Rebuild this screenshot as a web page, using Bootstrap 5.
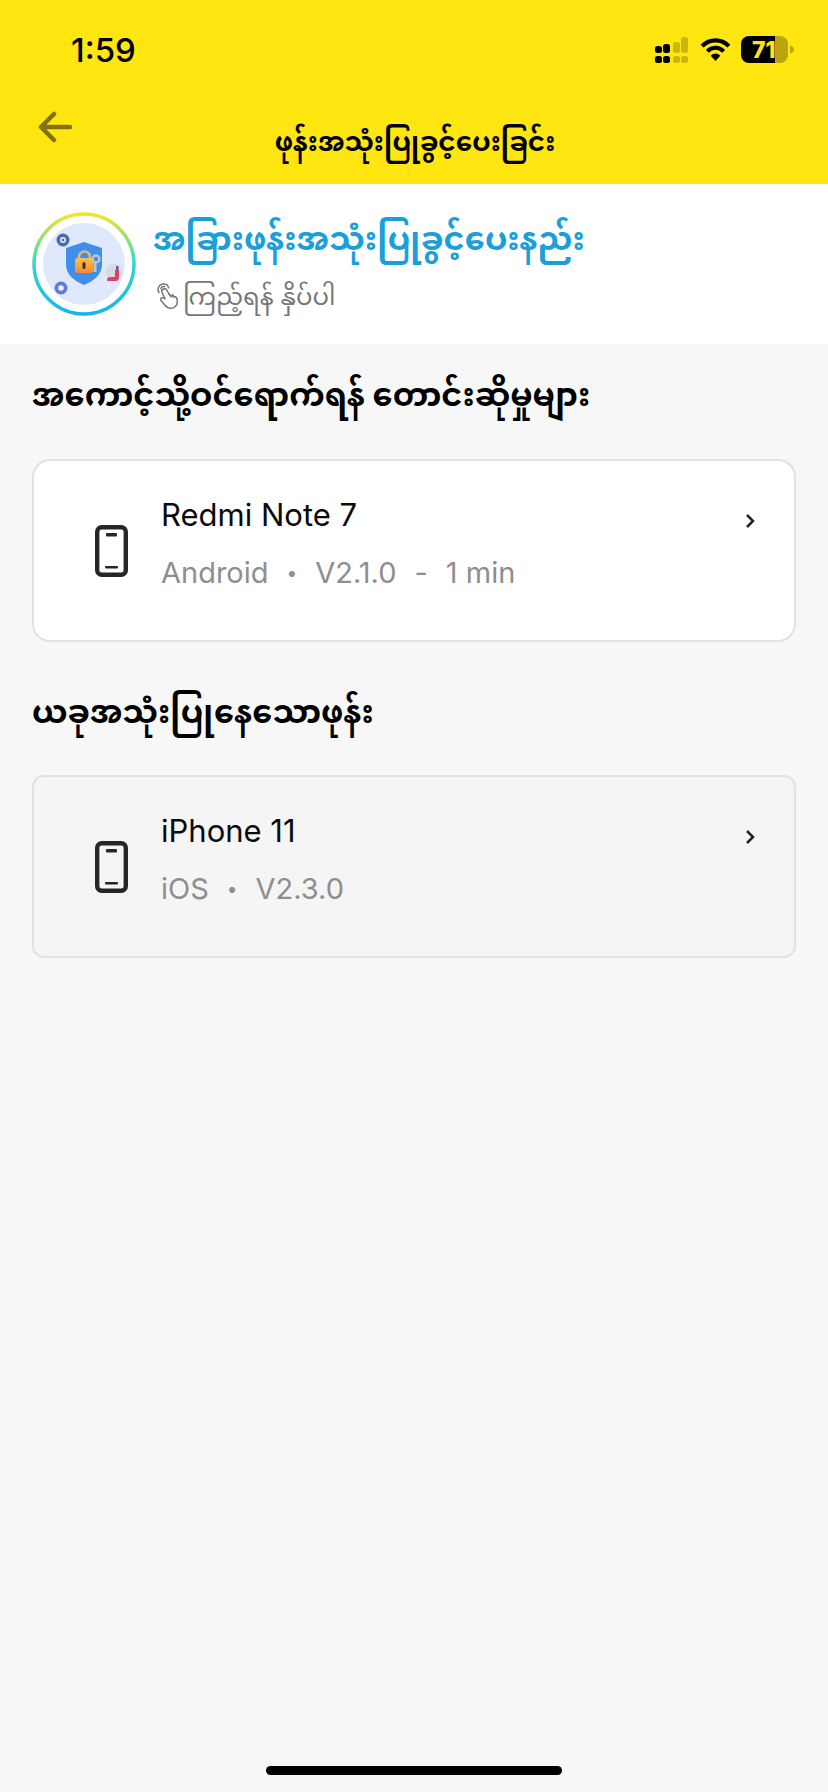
<!DOCTYPE html>
<html lang="my">
<head>
<meta charset="utf-8">
<title>ဖုန်းအသုံးပြုခွင့်ပေးခြင်း</title>
<meta name="viewport" content="width=device-width, initial-scale=1">
<link href="https://cdn.jsdelivr.net/npm/bootstrap@5.3.0/dist/css/bootstrap.min.css" rel="stylesheet">
<style>
html,body{height:100%}
body{background:#f7f7f7;font-family:"Inter","Liberation Sans","Noto Sans Myanmar","Padauk","Noto Sans",sans-serif;color:#000}
.shell{width:828px;height:1792px;overflow:hidden;position:relative}
.topbar{background:#ffe610;height:184px}
.statusline{height:100px;padding:0 33px 0 71px}
.clock{font-size:33px;font-weight:500;line-height:1;padding-top:34px}
.statusicons{padding-top:36px;gap:10px}
.sigicon{margin-top:1px;margin-right:2px}
.wifiicon{margin-top:1px}
.navline{height:84px;position:relative}
.backbtn{position:absolute;left:37px;top:11px;line-height:0}
.navtitle{font-size:26.300px;font-weight:700;line-height:1;padding-top:29px;text-align:center;padding-left:2px}
.promo{background:#fff;height:160px;padding:28px 32px 0 32px;gap:17px}
.promotitle{color:#1a9fdb;font-size:32.100px;font-weight:700;line-height:54px}
.promosub{color:#777;font-size:24.400px;line-height:38px;margin-top:11px;padding-left:4px;gap:5px}
.sectionhead{font-size:32px;font-weight:700;line-height:40px;margin:0 32px;padding-top:31px}
.sectionhead.second{padding-top:50px}
.devicecard{margin:44px 32px 0;height:183px;border:2px solid #e2e2e2;border-radius:18px;background:#fff;padding:0 39px 0 61px}
.devicecard.muted{background:#f5f5f5;border-radius:12px;margin-top:43px}
.devicename{font-size:31px;line-height:36px;padding-top:36px;color:#0a0a0a}
.devicemeta{font-size:29px;line-height:36px;margin-top:22px;color:#8e8e8e;gap:18px}
.metadot{font-size:19px;line-height:1}
.phoneglyph{margin-top:64px;margin-right:33px;flex:none}
.chev{margin-top:52px;flex:none}
.homebar{position:absolute;left:266px;top:1766px;width:296px;height:9px;background:#000;border-radius:5px}
</style>
</head>
<body>
<div class="shell">
  <header class="topbar">
    <div class="statusline d-flex justify-content-between">
      <div class="clock">1:59</div>
      <div class="statusicons d-flex align-items-start">
        <svg class="sigicon" width="33" height="26" viewBox="0 0 33 26" aria-hidden="true">
          <g fill="#000"><rect x="0" y="9" width="7" height="7" rx="2.500"/><rect x="8" y="7" width="7" height="9" rx="2.500"/><rect x="0" y="19" width="7" height="7" rx="2.500"/><rect x="8" y="19" width="7" height="7" rx="2.500"/></g>
          <g fill="#cdb70f"><rect x="18" y="5" width="7" height="11" rx="2.500"/><rect x="26" y="0" width="7" height="16" rx="2.500"/><rect x="18" y="19" width="7" height="7" rx="2.500"/><rect x="26" y="19" width="7" height="7" rx="2.500"/></g>
        </svg>
        <svg class="wifiicon" width="31" height="24" viewBox="0 0 32 25" aria-hidden="true">
          <g fill="none" stroke="#000" stroke-width="4.200"><path d="M2 9.500C10 1.500 22 1.500 30 9.500"/><path d="M7.500 15C12.500 10 19.500 10 24.500 15"/></g>
          <path d="M11 19.500C14 16.500 18 16.500 21 19.500L16 25Z" fill="#000"/>
        </svg>
        <svg width="54" height="27" viewBox="0 0 54 27" aria-hidden="true">
          <path d="M34 0h5a8 8 0 0 1 8 8v11a8 8 0 0 1-8 8h-5z" fill="#b9a60f"/>
          <path d="M34 0H8a8 8 0 0 0-8 8v11a8 8 0 0 0 8 8h26z" fill="#000"/>
          <path d="M49 9.500c2.500 .8 4 2.200 4 4s-1.500 3.200-4 4z" fill="#b9a60f"/>
          <text x="11" y="22" font-family="Inter,'Liberation Sans',sans-serif" font-size="23" font-weight="800" fill="#ffe610">71</text>
        </svg>
      </div>
    </div>
    <div class="navline">
      <a class="backbtn" href="#" aria-label="Back">
        <svg width="35" height="32" viewBox="0 0 35 32" aria-hidden="true"><path d="M33 16H5M17 3 4 16l13 13" fill="none" stroke="#7f730f" stroke-width="4.500" stroke-linecap="round" stroke-linejoin="round"/></svg>
      </a>
      <div class="navtitle">ဖုန်းအသုံးပြုခွင့်ပေးခြင်း</div>
    </div>
  </header>

  <section class="promo d-flex">
    <svg width="104" height="104" viewBox="0 0 104 104" class="flex-shrink-0" aria-hidden="true">
      <defs>
        <linearGradient id="ringgrad" x1="0" y1="0" x2="0" y2="1"><stop offset="0" stop-color="#f5e42a"/><stop offset=".5" stop-color="#35d8c8"/><stop offset="1" stop-color="#16b4ee"/></linearGradient>
        <linearGradient id="lockgrad" x1="0" y1="0" x2="0" y2="1"><stop offset="0" stop-color="#fbc04a"/><stop offset="1" stop-color="#f58a3c"/></linearGradient>
      </defs>
      <circle cx="52" cy="52" r="50" fill="#fff" stroke="url(#ringgrad)" stroke-width="3.500"/>
      <circle cx="52" cy="52" r="41" fill="#dfe9fb"/>
      <path d="M52 30l18 6v17c0 9-8 16-18 20-10-4-18-11-18-20V36z" fill="#3f8eea"/>
      <circle cx="64" cy="47" r="3.500" fill="none" stroke="#b9c6d6" stroke-width="2.500"/><path d="M63 51v9" stroke="#b9c6d6" stroke-width="3"/>
      <path d="M47 46v-1a5.500 5.500 0 0 1 11 0v1" fill="none" stroke="#d9b98a" stroke-width="2.500"/>
      <rect x="43" y="46" width="18" height="15" rx="2.500" fill="url(#lockgrad)"/>
      <rect x="50.500" y="50" width="3" height="7" rx="1.500" fill="#40302a"/>
      <circle cx="31" cy="28" r="6.500" fill="#4a6cad"/><circle cx="31" cy="28" r="3" fill="#dfe9fb"/><circle cx="31" cy="28" r="1.300" fill="#4a6cad"/>
      <circle cx="29" cy="76" r="6.500" fill="#5a7fd0"/><circle cx="29" cy="76" r="2.800" fill="#eef3fd"/>
      <circle cx="82" cy="60" r="8.500" fill="#d8dbe6"/><path d="M75 68c0-2 1-3 3-3h5v-7h4v7c0 2-1 4-3 4h-8c-1 0-1-.500-1-1z" fill="#d9455f"/><rect x="84" y="54" width="2.500" height="4" fill="#3b6c9c"/>
    </svg>
    <div>
      <div class="promotitle">အခြားဖုန်းအသုံးပြုခွင့်ပေးနည်း</div>
      <div class="promosub d-flex align-items-center">
        <svg width="21" height="26" viewBox="0 0 21 26" aria-hidden="true" class="flex-shrink-0"><g fill="none" stroke="#777" stroke-width="1.500" stroke-linecap="round" stroke-linejoin="round"><path d="M4.800 8.500C5.800 11 7 13.500 8 15.800 6.800 15 5 14.300 4 15.200c-.9.800-.3 2 .6 3l3.400 4c1.600 2 3.500 3 5.800 3 3.600 0 6.400-2.600 6.400-6v-2.500c0-1.800-1.200-2.800-2.800-3.200l-3-.8c-1-.3-1.700-.5-2.200-1.200L9.500 6.500C8.500 4.800 4 6 4.800 8.500z"/><path d="M12.400 10.800l1.600 3.200M15.600 11.500l1.300 2.800"/><path d="M2 9.500C-.5 5.500 2.500 1 6.500 1c2.500 0 4.500 1.500 5.200 3.800"/><path d="M3.800 5.500C4.500 4 6 3.300 7.500 3.800"/></g></svg>
        <span>ကြည့်ရန် နှိပ်ပါ</span>
      </div>
    </div>
  </section>

  <h2 class="sectionhead">အကောင့်သို့ဝင်ရောက်ရန် တောင်းဆိုမှုများ</h2>
  <div class="devicecard d-flex">
    <svg class="phoneglyph" width="33" height="52" viewBox="0 0 33 52" aria-hidden="true"><rect x="2.200" y="2.200" width="28.600" height="47.600" rx="4.500" fill="none" stroke="#262626" stroke-width="4.400"/><rect x="11" y="8" width="11" height="3.500" rx="1" fill="#262626"/><rect x="10" y="41" width="13" height="2.500" rx="1" fill="#262626"/></svg>
    <div class="flex-grow-1">
      <div class="devicename">Redmi Note 7</div>
      <div class="devicemeta d-flex align-items-center"><span>Android</span><span class="metadot">•</span><span>V2.1.0</span><span>-</span><span>1 min</span></div>
    </div>
    <svg class="chev" width="10" height="16" viewBox="0 0 10 16" aria-hidden="true"><path d="M2 2l6 6-6 6" fill="none" stroke="#222" stroke-width="2.500"/></svg>
  </div>

  <h2 class="sectionhead second">ယခုအသုံးပြုနေသောဖုန်း</h2>
  <div class="devicecard muted d-flex">
    <svg class="phoneglyph" width="33" height="52" viewBox="0 0 33 52" aria-hidden="true"><rect x="2.200" y="2.200" width="28.600" height="47.600" rx="4.500" fill="none" stroke="#262626" stroke-width="4.400"/><rect x="11" y="8" width="11" height="3.500" rx="1" fill="#262626"/><rect x="10" y="41" width="13" height="2.500" rx="1" fill="#262626"/></svg>
    <div class="flex-grow-1">
      <div class="devicename">iPhone 11</div>
      <div class="devicemeta d-flex align-items-center"><span>iOS</span><span class="metadot">•</span><span>V2.3.0</span></div>
    </div>
    <svg class="chev" width="10" height="16" viewBox="0 0 10 16" aria-hidden="true"><path d="M2 2l6 6-6 6" fill="none" stroke="#222" stroke-width="2.500"/></svg>
  </div>

  <div class="homebar"></div>
</div>
<script src="https://cdn.jsdelivr.net/npm/bootstrap@5.3.0/dist/js/bootstrap.bundle.min.js"></script>
</body>
</html>
